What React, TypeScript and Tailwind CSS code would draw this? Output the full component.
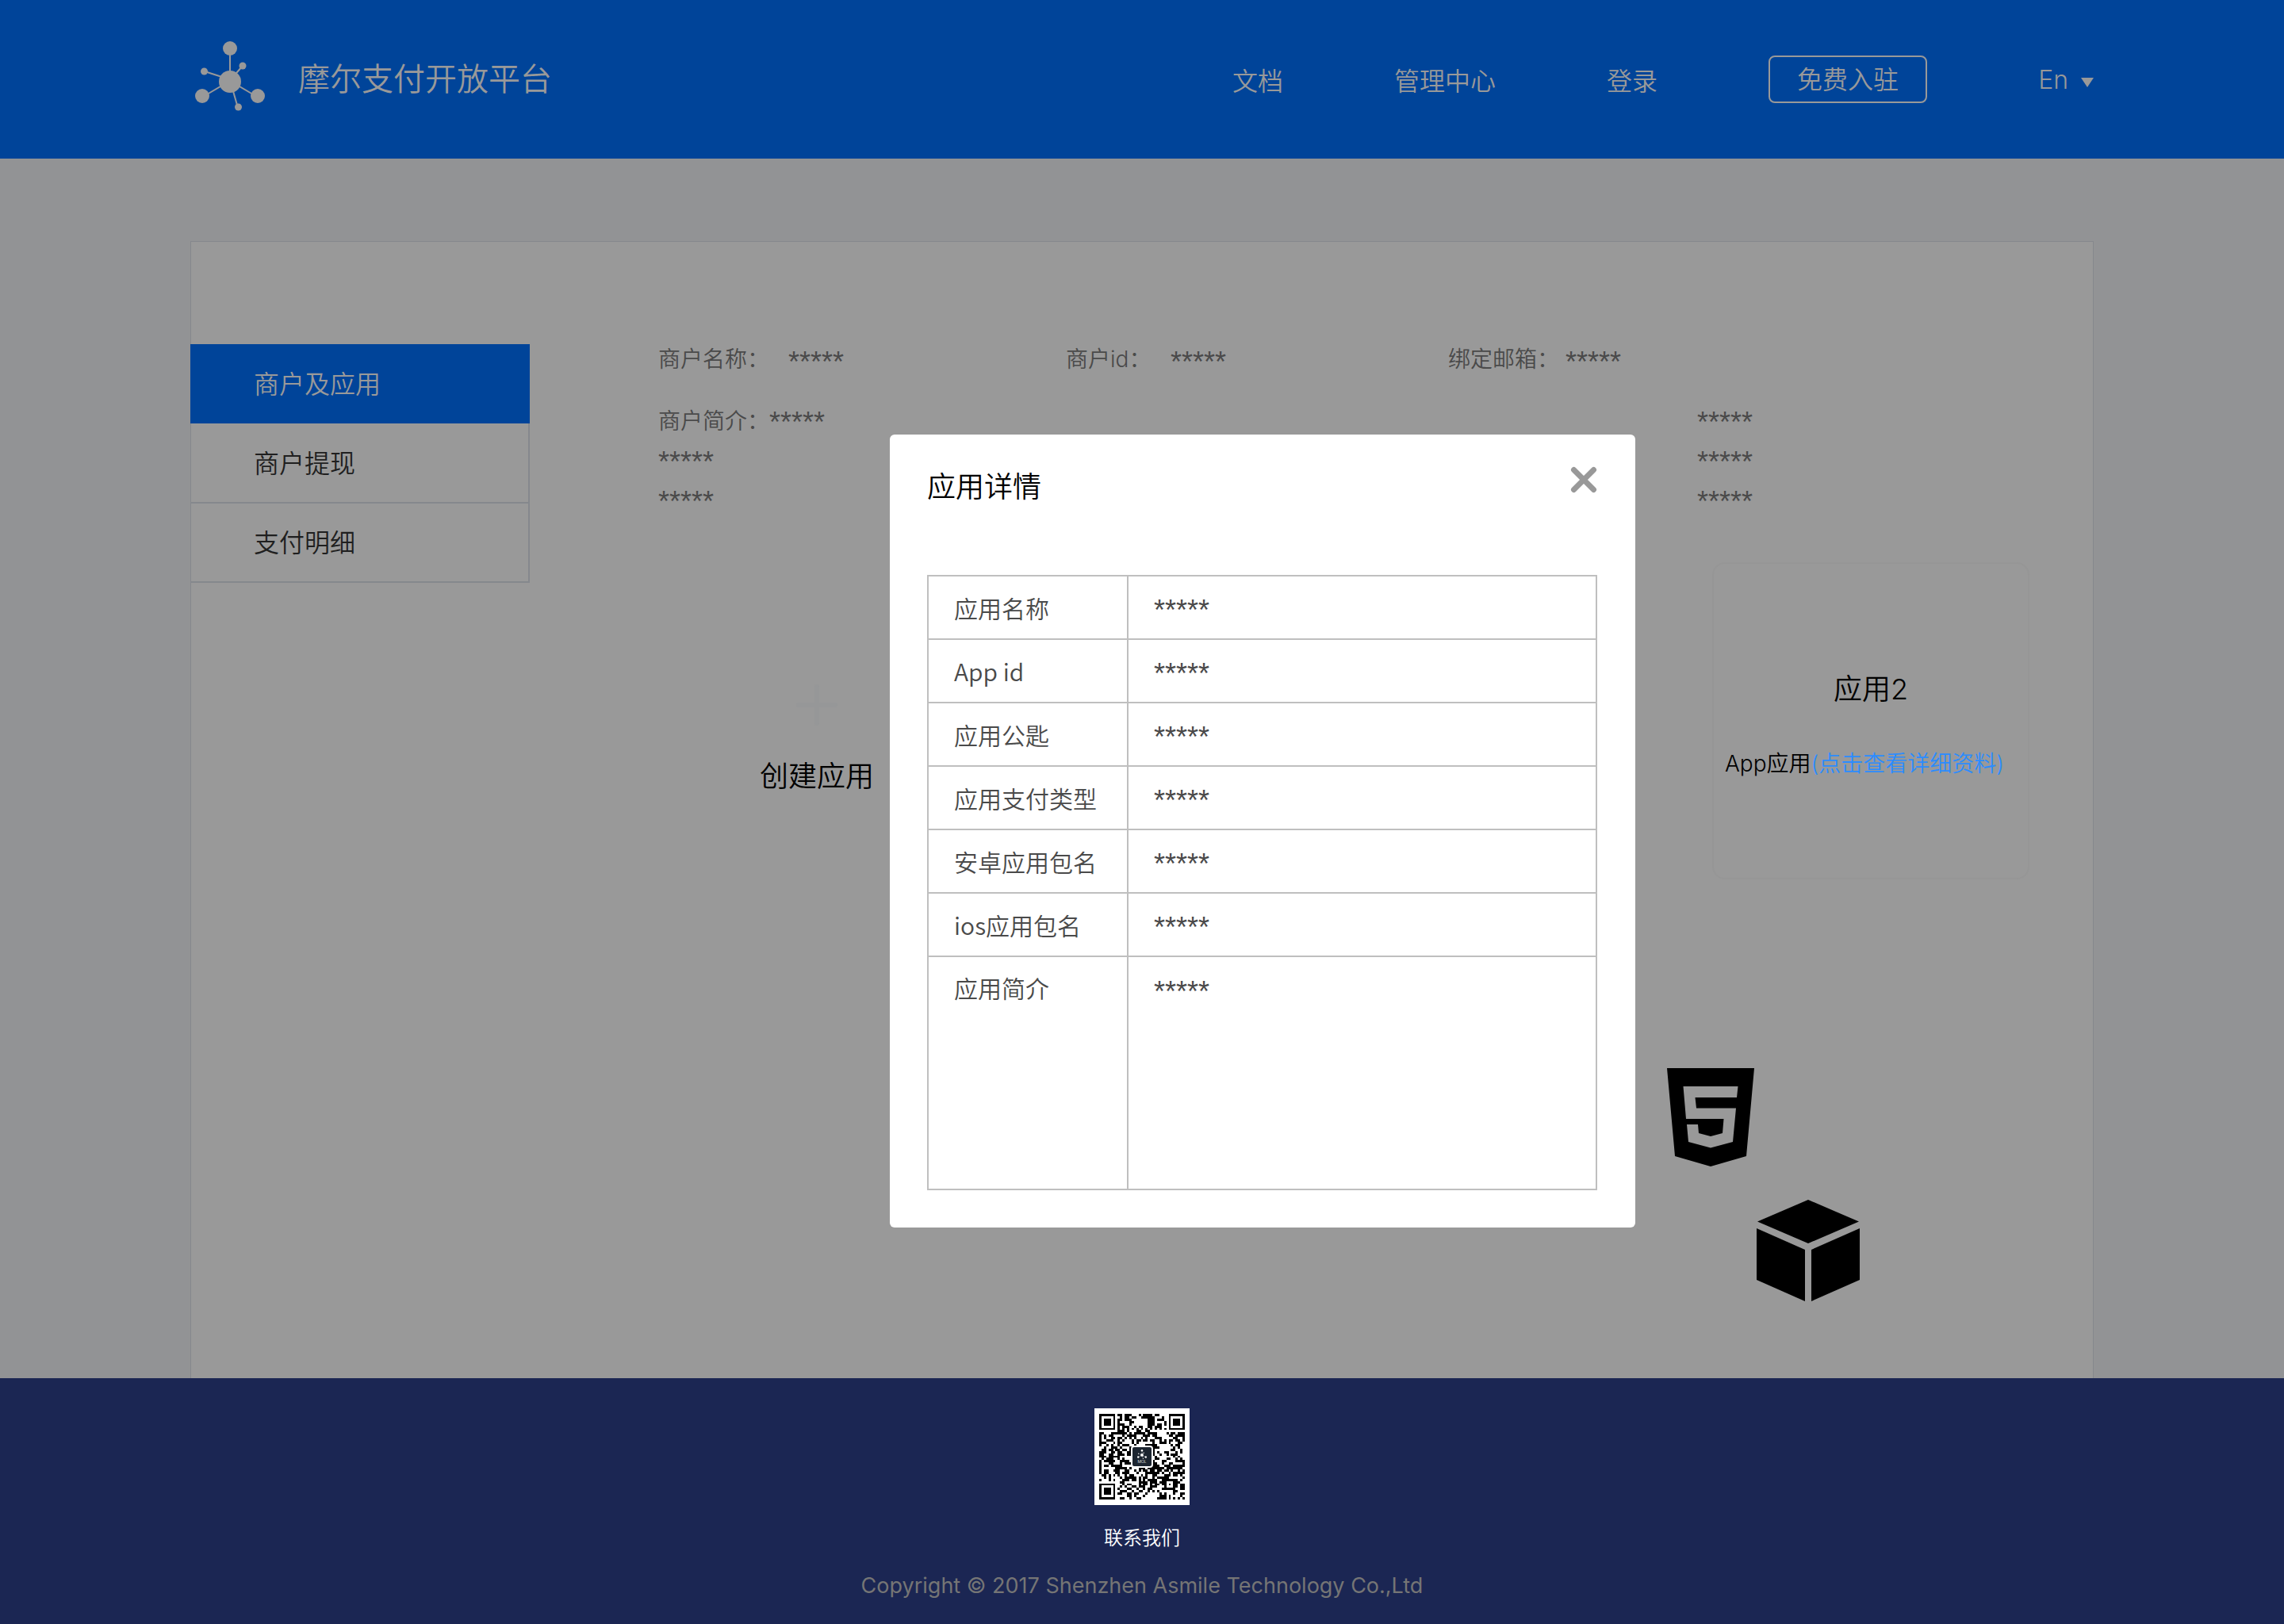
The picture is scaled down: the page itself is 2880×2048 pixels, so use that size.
import React from "react";

function Mask() {
  return (
    <span className="flex h-10 items-center pt-2 font-['Liberation_Sans',sans-serif] text-[36px] leading-8 font-normal">
      *****
    </span>
  );
}

function Logo({ className }: { className: string }) {
  return (
    <svg viewBox="0 0 88 88" className={className} aria-hidden="true">
      <g stroke="currentColor" strokeWidth="2" fill="none">
        <path d="M44 12V44" />
        <path d="M12 38L40 47" />
        <path d="M60 31L46 47" />
        <path d="M10 70L44 50L78 70" />
        <path d="M46 56L54 84" />
      </g>
      <g fill="currentColor">
        <circle cx="44" cy="51" r="14" />
        <circle cx="44" cy="9" r="9" />
        <circle cx="9" cy="69" r="9" />
        <circle cx="79" cy="69" r="9" />
        <circle cx="11.500" cy="38" r="4.500" />
        <circle cx="60" cy="31" r="4.500" />
        <circle cx="54.500" cy="83" r="4.500" />
      </g>
    </svg>
  );
}

const QR_SIZE = 37;

function qrPath(): string {
  let seed = 20177;
  const next = () => {
    seed = (seed * 1103515245 + 12345) % 2147483648;
    return seed / 2147483648;
  };
  const finder = (x: number, y: number) => {
    const ring = Math.max(Math.abs(x - 3), Math.abs(y - 3));
    return ring === 3 || ring <= 1;
  };
  let d = "";
  for (let y = 0; y < QR_SIZE; y++) {
    for (let x = 0; x < QR_SIZE; x++) {
      let on = next() < 0.5;
      const right = x >= QR_SIZE - 8;
      const bottom = y >= QR_SIZE - 8;
      if (x < 8 && y < 8) on = x < 7 && y < 7 && finder(x, y);
      else if (right && y < 8) on = x > QR_SIZE - 8 && y < 7 && finder(x - (QR_SIZE - 7), y);
      else if (x < 8 && bottom) on = x < 7 && y > QR_SIZE - 8 && finder(x, y - (QR_SIZE - 7));
      else if (Math.abs(x - 30) <= 2 && Math.abs(y - 30) <= 2) {
        on = Math.max(Math.abs(x - 30), Math.abs(y - 30)) !== 1;
      } else if (x === 6 || y === 6) on = (x + y) % 2 === 0;
      if (on) d += `M${x} ${y}h1v1h-1z`;
    }
  }
  return d;
}

function QrCode() {
  return (
    <div className="relative flex h-[122px] w-[120px] items-center justify-center bg-white">
      <svg viewBox={`0 0 ${QR_SIZE} ${QR_SIZE}`} className="size-27" shapeRendering="crispEdges" role="img" aria-label="联系我们">
        <path d={qrPath()} fill="#000" />
      </svg>
      <div className="absolute inset-0 flex items-center justify-center">
        <div className="flex size-7 flex-col items-center justify-center rounded-sm border-2 border-white bg-[#1c2530] text-white">
          <Logo className="size-3" />
          <span className="text-[5px] leading-[6px]">MOL</span>
        </div>
      </div>
    </div>
  );
}

function Html5Icon() {
  return (
    <svg viewBox="0 0 110 124" className="mr-[427px] h-[124px] w-[110px]" aria-hidden="true">
      <path
        fillRule="evenodd"
        d="M0 0H110L100 111L55 124L10 111ZM20.500 23L24 64H71.500L70 82L55 86L40 82L39 71H25L27 93L55 100.500L83 93L87 50.500H37L35.500 37H88L89.500 23Z"
      />
    </svg>
  );
}

function CubeIcon() {
  return (
    <svg viewBox="0 0 130 128" className="mr-[294px] h-32 w-[130px]" aria-hidden="true">
      <path d="M65 0L129 27.500L65 55L1 27.500Z" />
      <path d="M0 36L61 63V128L0 101Z" />
      <path d="M130 36L69 63V128L130 101Z" />
    </svg>
  );
}

function Header() {
  return (
    <header className="bg-[#004499] text-[#999999]">
      <div className="mx-auto flex h-50 w-10/12 items-center justify-between">
        <a href="#" className="flex items-center pb-2 pl-1.5">
          <Logo className="size-22" />
          <span className="ml-[42px] pt-2 text-[40px] leading-12">摩尔支付开放平台</span>
        </a>
        <nav className="flex items-center gap-35 text-[32px] leading-10">
          <a href="#" className="pt-1.5">
            文档
          </a>
          <a href="#" className="pt-1.5">
            管理中心
          </a>
          <a href="#" className="pt-1.5">
            登录
          </a>
          <button type="button" className="flex h-15 w-50 items-center justify-center rounded-lg border-2 border-[#999999] pt-0.5">
            免费入驻
          </button>
          <button type="button" className="flex items-center gap-4 pt-0.5">
            En
            <svg viewBox="0 0 16 12" className="mt-1.5 h-3 w-4" fill="currentColor" aria-hidden="true">
              <path d="M0 0H16L8 12Z" />
            </svg>
          </button>
        </nav>
      </div>
    </header>
  );
}

function Sidebar() {
  return (
    <nav className="mt-px -ml-px w-107 shrink-0 text-[32px] leading-10 text-[#1f1f1f]">
      <a href="#" aria-current="page" className="flex h-25 items-center bg-[#004499] pt-0.5 pl-20 text-[#999999]">
        商户及应用
      </a>
      <a href="#" className="flex h-[101px] items-center border-r-2 border-b-2 border-[#85888d] pt-0.5 pl-20">
        商户提现
      </a>
      <a href="#" className="flex h-25 items-center border-r-2 border-b-2 border-[#85888d] pt-0.5 pl-20">
        支付明细
      </a>
    </nav>
  );
}

function MerchantInfo() {
  return (
    <div className="text-[28px] leading-10 text-[#4a4a4a]">
      <dl className="flex h-9">
        <div className="flex w-[514px]">
          <dt className="w-[164px]">商户名称：</dt>
          <dd>
            <Mask />
          </dd>
        </div>
        <div className="flex w-[482px]">
          <dt className="w-[132px]">商户id：</dt>
          <dd>
            <Mask />
          </dd>
        </div>
        <div className="flex">
          <dt className="w-[148px]">绑定邮箱：</dt>
          <dd>
            <Mask />
          </dd>
        </div>
      </dl>
      <div className="mt-10 flex justify-between pr-[429px]">
        <dl className="flex flex-col gap-2.5">
          <div className="flex h-10">
            <dt className="w-[140px] leading-11">商户简介：</dt>
            <dd>
              <Mask />
            </dd>
          </div>
          <dd>
            <Mask />
          </dd>
          <dd>
            <Mask />
          </dd>
        </dl>
        <div className="flex flex-col gap-2.5">
          <Mask />
          <Mask />
          <Mask />
        </div>
      </div>
    </div>
  );
}

function AppCard({ name }: { name: string }) {
  return (
    <article className="h-100 w-100 rounded-2xl border-2 border-[#969696] pt-[134px] text-center text-black">
      <h2 className="text-[36px] leading-12">{name}</h2>
      <p className="mt-[50px] pl-3.5 text-left text-[28px] leading-10 whitespace-nowrap">
        App应用
        <a href="#" className="text-[#2b8cff]">
          (点击查看详细资料)
        </a>
      </p>
    </article>
  );
}

function Apps() {
  return (
    <div className="mt-15 flex justify-between pr-20">
      <button type="button" className="flex h-100 w-100 flex-col items-center pt-[154px] text-[36px] leading-12 text-black">
        <svg viewBox="0 0 52 52" className="size-13" stroke="#969798" strokeWidth="6" strokeLinecap="round" aria-hidden="true">
          <path d="M3 26H49M26 3V49" />
        </svg>
        <span className="mt-10">创建应用</span>
      </button>
      <AppCard name="应用1" />
      <AppCard name="应用2" />
    </div>
  );
}

const DETAILS = ["应用名称", "App id", "应用公匙", "应用支付类型", "安卓应用包名", "ios应用包名"];

function DetailsDialog() {
  return (
    <div className="absolute inset-0 flex items-start justify-center pt-137 pl-76">
      <section role="dialog" aria-labelledby="dialog-title" className="w-[940px] rounded-md bg-white pt-10 pr-12 pb-[47px] pl-[47px]">
        <div className="flex h-[137px] items-start justify-between">
          <h1 id="dialog-title" className="pt-0.5 text-[36px] leading-12 text-black">
            应用详情
          </h1>
          <button type="button" aria-label="关闭">
            <svg viewBox="0 0 34 34" className="size-[34px]" stroke="#999999" strokeWidth="7" strokeLinecap="round">
              <path d="M4.500 4.500L29.500 29.500M29.500 4.500L4.500 29.500" />
            </svg>
          </button>
        </div>
        <table className="w-full border-collapse text-left font-['Noto_Sans_CJK_SC',sans-serif] text-[30px] leading-10 text-[#4a4a4a]">
          <tbody>
            {DETAILS.map((label) => (
              <tr key={label} className="h-20">
                <th scope="row" className="w-63 border-2 border-[#bfbfbf] pl-8 font-[350]">
                  {label}
                </th>
                <td className="border-2 border-[#bfbfbf] pl-8">
                  <Mask />
                </td>
              </tr>
            ))}
            <tr className="h-[294px] align-top">
              <th scope="row" className="border-2 border-[#bfbfbf] pt-4.5 pl-8 font-[350]">
                应用简介
              </th>
              <td className="border-2 border-[#bfbfbf] pt-5 pl-8">
                <Mask />
              </td>
            </tr>
          </tbody>
        </table>
      </section>
    </div>
  );
}

function Footer() {
  return (
    <footer className="flex flex-col items-center bg-[#1b2653] pt-[38px] pb-7">
      <QrCode />
      <a href="#" className="mt-6 text-[24px] leading-9 text-white">
        联系我们
      </a>
      <p className="mt-[22px] text-[27px] leading-10 font-normal text-[#757575]">
        Copyright © 2017 Shenzhen Asmile Technology Co.,Ltd
      </p>
    </footer>
  );
}

export default function App() {
  return (
    <div className="relative flex min-h-screen flex-col bg-[#929395] font-['Inter','Noto_Sans_CJK_SC',sans-serif] font-[350]">
      <Header />
      <main className="mx-auto mt-26 flex w-10/12 grow border-x border-t border-[#85888d] bg-[#999999] pt-32">
        <Sidebar />
        <div className="ml-[162px] grow">
          <MerchantInfo />
          <Apps />
          <div className="mt-[238px] flex flex-col items-end gap-[42px]">
            <Html5Icon />
            <CubeIcon />
          </div>
        </div>
      </main>
      <Footer />
      <DetailsDialog />
    </div>
  );
}
